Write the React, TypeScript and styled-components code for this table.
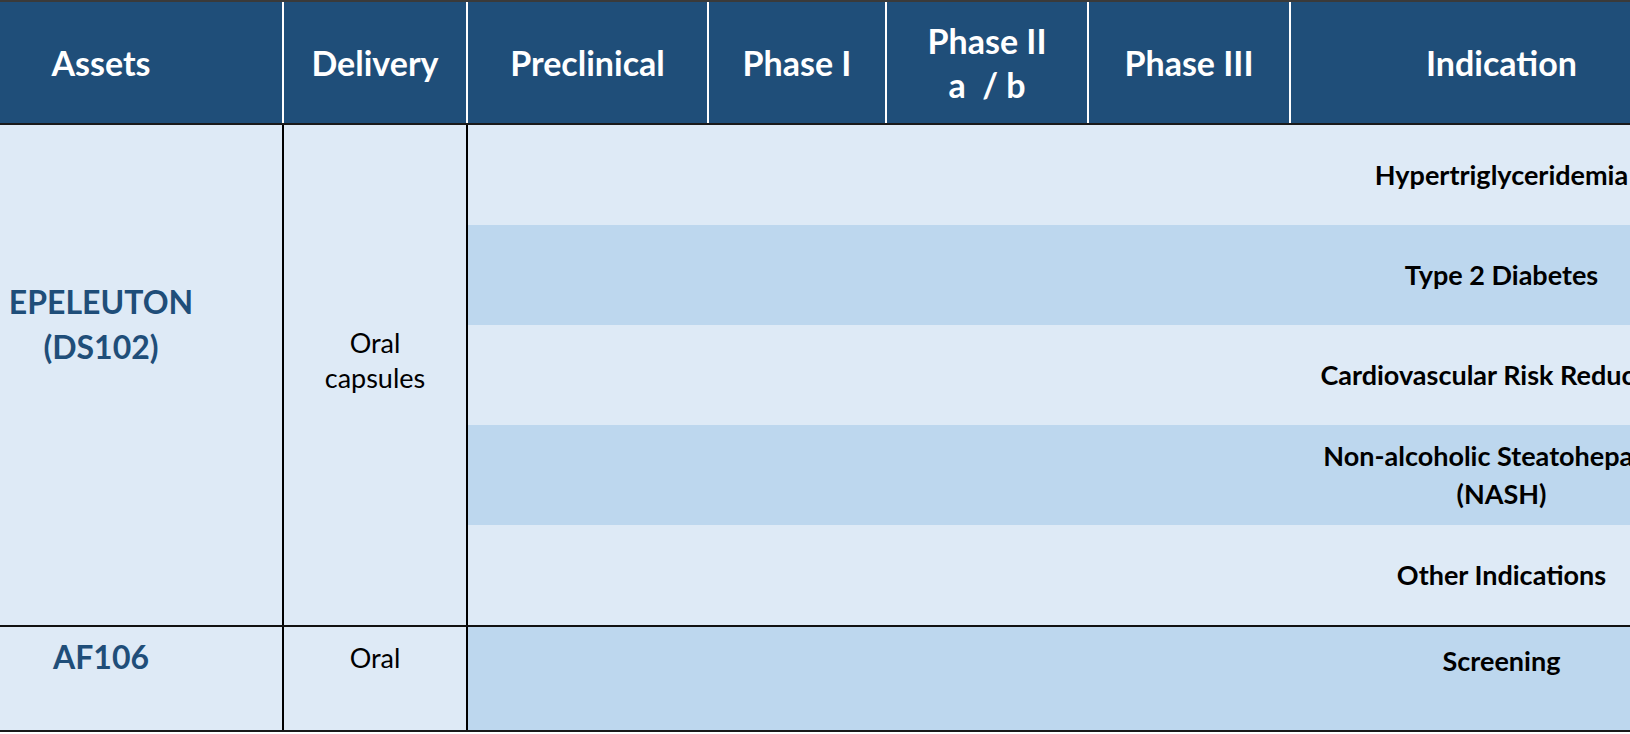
import React from "react";
import styled, { createGlobalStyle } from "styled-components";

const Global = createGlobalStyle`
  html, body {
    margin: 0;
    padding: 0;
    background: #ffffff;
    overflow: hidden;
  }
  body {
    font-family: Lato, "Noto Sans", "Liberation Sans", sans-serif;
  }
`;

const HEAD_BG = "#1F4E79";
const LIGHT = "#DEEAF6";
const MID = "#BDD7EE";

const Page = styled.div`
  width: 1630px;
  height: 734px;
  overflow: hidden;
`;

const Table = styled.div`
  width: 1712px;
  border-top: 2px solid #3a3a3a;
  border-bottom: 2px solid #1a1a1a;
`;

const HeaderRow = styled.div`
  display: grid;
  grid-template-columns: 282px 184px 241px 178px 202px 202px 1fr;
  height: 121px;
  background: ${HEAD_BG};
  border-bottom: 2px solid #1a1a1a;
`;

const HeadCell = styled.div<{ $first?: boolean }>`
  display: flex;
  align-items: center;
  justify-content: center;
  text-align: center;
  white-space: pre;
  color: #ffffff;
  font-weight: 700;
  font-size: 34px;
  line-height: 44px;
  border-left: ${(p) => (p.$first ? "none" : "2px solid #ffffff")};
  padding-right: ${(p) => (p.$first ? "80px" : "0")};
`;

const Group = styled.div<{ $height: number; $divider?: boolean }>`
  display: grid;
  grid-template-columns: 282px 184px 1fr;
  height: ${(p) => p.$height}px;
  border-top: ${(p) => (p.$divider ? "2px solid #111111" : "none")};
`;

const AssetCell = styled.div<{ $padTop: number }>`
  background: ${LIGHT};
  color: ${HEAD_BG};
  font-weight: 700;
  font-size: 32px;
  line-height: 45px;
  text-align: center;
  padding-right: 80px;
  padding-top: ${(p) => p.$padTop}px;
`;

const DeliveryCell = styled.div<{ $padTop: number }>`
  background: ${LIGHT};
  border-left: 2px solid #000000;
  color: #000000;
  font-weight: 400;
  font-size: 27px;
  line-height: 35px;
  text-align: center;
  padding-top: ${(p) => p.$padTop}px;
`;

const StageArea = styled.div`
  border-left: 2px solid #000000;
  display: flex;
  flex-direction: column;
`;

const Stripe = styled.div<{ $alt: boolean; $top?: boolean }>`
  flex: 1;
  display: grid;
  grid-template-columns: 823px 1fr;
  background: ${(p) => (p.$alt ? MID : LIGHT)};
  align-items: ${(p) => (p.$top ? "start" : "center")};
`;

const Indication = styled.div<{ $padTop?: number }>`
  grid-column: 2;
  text-align: center;
  white-space: nowrap;
  font-weight: 700;
  font-size: 27px;
  line-height: 38px;
  color: #000000;
  padding-top: ${(p) => p.$padTop ?? 0}px;
`;

const headers = [
  "Assets",
  "Delivery",
  "Preclinical",
  "Phase I",
  "Phase II\na  / b",
  "Phase III",
  "Indication",
];

const epeIndications: React.ReactNode[] = [
  "Hypertriglyceridemia",
  "Type 2 Diabetes",
  "Cardiovascular Risk Reduction",
  <>
    Non-alcoholic Steatohepatitis
    <br />
    (NASH)
  </>,
  "Other Indications",
];

export default function App() {
  return (
    <Page>
      <Global />
      <Table>
        <HeaderRow>
          {headers.map((h, i) => (
            <HeadCell key={i} $first={i === 0}>
              {h}
            </HeadCell>
          ))}
        </HeaderRow>

        <Group $height={500}>
          <AssetCell $padTop={154}>
            EPELEUTON
            <br />
            (DS102)
          </AssetCell>
          <DeliveryCell $padTop={200}>
            Oral
            <br />
            capsules
          </DeliveryCell>
          <StageArea>
            {epeIndications.map((ind, i) => (
              <Stripe key={i} $alt={i % 2 === 1}>
                <Indication>{ind}</Indication>
              </Stripe>
            ))}
          </StageArea>
        </Group>

        <Group $height={103} $divider>
          <AssetCell $padTop={7}>AF106</AssetCell>
          <DeliveryCell $padTop={13}>Oral</DeliveryCell>
          <StageArea>
            <Stripe $alt $top>
              <Indication $padTop={15}>Screening</Indication>
            </Stripe>
          </StageArea>
        </Group>
      </Table>
    </Page>
  );
}
